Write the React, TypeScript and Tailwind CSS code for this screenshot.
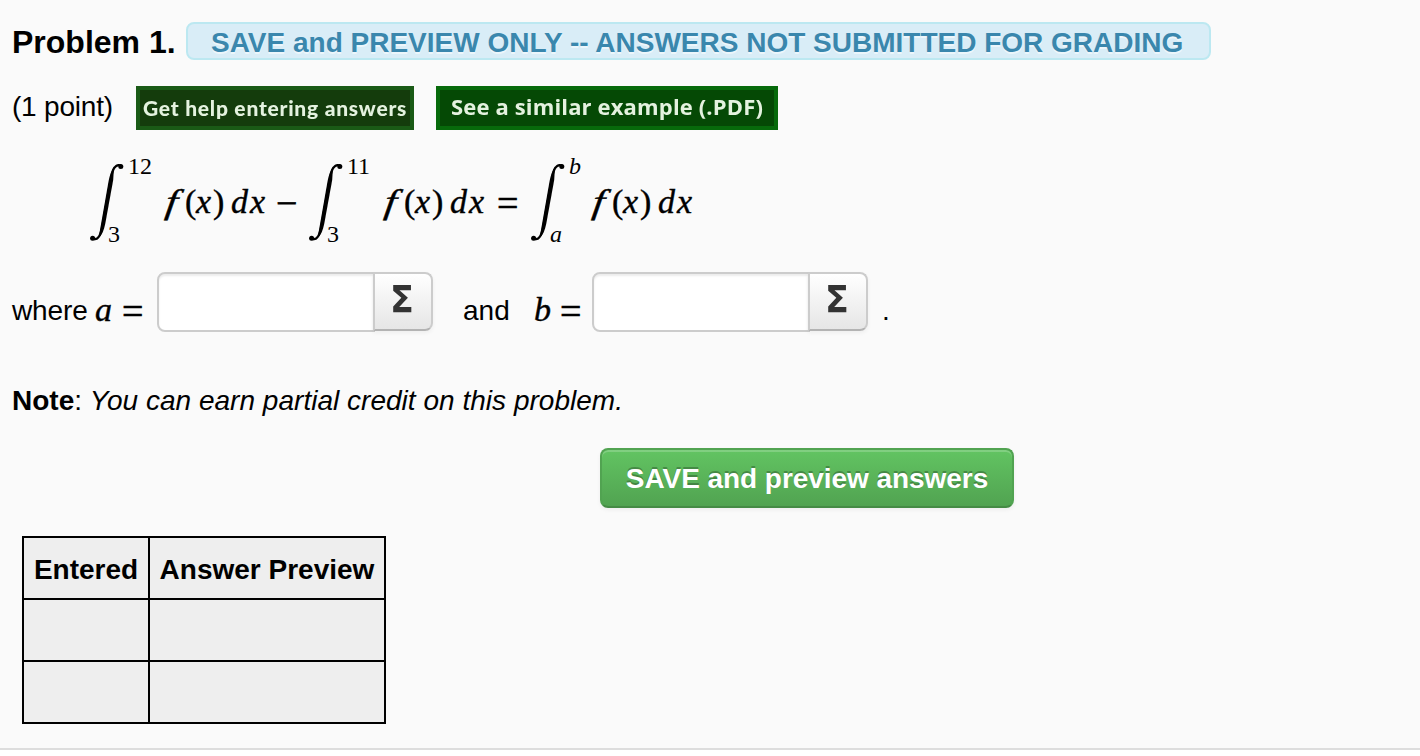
import type { ReactNode } from "react";

/* ── Integral sign with its limits ── */
function Integral({ upper, lower, italic }: { upper: string; lower: string; italic?: boolean }) {
  return (
    <div className={`flex h-[100px] shrink-0 font-['Liberation_Serif',serif] text-[24px] leading-[24px] ${italic ? "w-[64px] italic" : "w-[78px]"}`}>
      <svg viewBox="0 0 34 78" className="mt-[13px] h-[78px] w-[34px] shrink-0">
        <path
          d="M3 75.8 C8.3 78 10.8 71.5 12.6 62 L20.6 17 C22.4 7 24.8 0.6 30.4 2.3"
          fill="none"
          stroke="#000"
          strokeWidth="2.2"
          strokeLinecap="round"
        />
        <path d="M10 67 L18.6 18 C19.8 12 21.4 7 24 3.4 L23.2 17 L15.2 61 C14 67 12 72 8.6 75 Z" />
        <circle cx="2.6" cy="75.2" r="2.5" />
        <circle cx="30.8" cy="3.4" r="2.5" />
      </svg>
      <div className="relative flex-1">
        <span className="absolute left-[4px] top-[4px]">{upper}</span>
        <span className={`absolute top-[72px] ${italic ? "left-[-15px]" : "left-[-16px]"}`}>{lower}</span>
      </div>
    </div>
  );
}

/* ── f(x) dx ── */
function Integrand() {
  return (
    <div className="mt-[32px] flex h-[40px] w-[98px] shrink-0 whitespace-nowrap font-['Liberation_Serif',serif] text-[34px] italic leading-[40px] [-webkit-text-stroke:0.4px_#000]">
      <span className="-ml-[2px] w-[19px] origin-left -skew-x-6 scale-x-125">f</span>
      <span className="w-[11px] not-italic">(</span>
      <span className="w-[17px]">x</span>
      <span className="w-[18px] not-italic">)</span>
      <span className="w-[19px]">d</span>
      <span className="w-[16px]">x</span>
    </div>
  );
}

function Operator({ children }: { children: ReactNode }) {
  return (
    <span className="mt-[33px] w-[21px] text-center font-['Liberation_Serif',serif] text-[38px] leading-[40px] [-webkit-text-stroke:0.6px_#000]">
      {children}
    </span>
  );
}

/* ── Text field with the equation editor button ── */
function AnswerField({ label }: { label: string }) {
  return (
    <div className="flex h-[60px] w-[276px] shrink-0">
      <input
        aria-label={label}
        className="h-[60px] w-[218px] rounded-l-[8px] border-2 border-[#ccc] bg-white px-3 shadow-[inset_0_2px_2px_rgba(0,0,0,0.075)] outline-none"
      />
      <button className="-ml-[2px] flex h-[59px] w-[60px] justify-center rounded-r-[8px] border-2 border-[#ccc] border-b-[#b3b3b3] bg-linear-to-b from-white to-[#e6e6e6] shadow-[0_2px_4px_rgba(0,0,0,0.05)]">
        <span className="mt-[5px] -ml-[2px] font-['DejaVu_Sans',sans-serif] text-[38px] font-bold leading-[40px] text-[#333] scale-x-[0.92]">
          Σ
        </span>
      </button>
    </div>
  );
}

export default function App() {
  return (
    <div className="h-[756px] w-[1420px] overflow-hidden bg-white font-['Liberation_Sans',Arial,sans-serif] text-[28px] leading-[40px] text-black">
      <div className="h-[750px] border-b-2 border-[#ddd] bg-[#fafafa] pt-[22px]">

        {/* Title */}
        <div className="flex h-[38px] whitespace-nowrap font-bold">
          <h1 className="ml-[12px] w-[174px] text-[32px]">Problem 1.</h1>
          <div className="w-[1025px] rounded-[8px] border-2 border-[#bce8f1] bg-[#d9edf7] pl-[23px] leading-[37px] text-[#3a87ad] [text-shadow:0_2px_0_rgba(255,255,255,0.5)]">
            SAVE and PREVIEW ONLY -- ANSWERS NOT SUBMITTED FOR GRADING
          </div>
        </div>

        {/* Points and help links */}
        <div className="mt-[26px] flex h-[44px] whitespace-nowrap">
          <span className="mt-[1px] ml-[12px] w-[124px] tracking-[-0.2px]">(1 point)</span>
          <a className="h-[44px] w-[278px] border-4 border-[#1a5a16] bg-[#143c0c] pl-[3px] font-['Lato',sans-serif] text-[21px] font-black leading-[35px] tracking-[0.75px] text-[#e4f2df]">
            <span className="inline-block blur-[0.6px]">Get help entering answers</span>
          </a>
          <a className="ml-[22px] h-[44px] w-[342px] border-4 border-[#076a0b] bg-[#054905] pl-[11px] font-['Open_Sans',sans-serif] text-[22px] font-bold leading-[32px] tracking-[0.15px] text-[#e4f2df]">
            <span className="inline-block blur-[0.6px]">See a similar example (.PDF)</span>
          </a>
        </div>

        {/* Equation */}
        <div className="mt-[20px] ml-[90px] flex h-[100px]">
          <Integral upper="12" lower="3" />
          <Integrand />
          <div className="flex w-[43px] pl-[10px]"><Operator>−</Operator></div>
          <Integral upper="11" lower="3" />
          <Integrand />
          <div className="ml-[12px] flex w-[34px]"><Operator>=</Operator></div>
          <Integral upper="b" lower="a" italic />
          <Integrand />
        </div>

        {/* Answer fields */}
        <div className="mt-[22px] flex h-[60px] whitespace-nowrap">
          <span className="mt-[19px] ml-[12px] w-[83px] tracking-[-0.1px]">where</span>
          <span className="mt-[18px] w-[27px] font-['Liberation_Serif',serif] text-[34px] italic [-webkit-text-stroke:0.4px_#000]">a</span>
          <span className="mt-[19px] w-[35px] font-['Liberation_Serif',serif] text-[38px] [-webkit-text-stroke:0.6px_#000]">=</span>
          <AnswerField label="a" />
          <span className="mt-[19px] ml-[30px] w-[71px]">and</span>
          <span className="mt-[18px] w-[26px] font-['Liberation_Serif',serif] text-[34px] italic [-webkit-text-stroke:0.4px_#000]">b</span>
          <span className="mt-[19px] w-[32px] font-['Liberation_Serif',serif] text-[38px] [-webkit-text-stroke:0.6px_#000]">=</span>
          <AnswerField label="b" />
          <span className="mt-[19px] ml-[14px]">.</span>
        </div>

        <p className="mt-[49px] ml-[12px] h-[40px] whitespace-nowrap">
          <b>Note</b>: <i className="tracking-[0.02px]">You can earn partial credit on this problem.</i>
        </p>

        <button className="mt-[27px] ml-[600px] block h-[60px] w-[414px] whitespace-nowrap rounded-[8px] border-2 border-[#51a351] border-b-[#458b45] bg-linear-to-b from-[#62c462] to-[#51a351] pt-[2px] font-bold tracking-[-0.05px] text-white shadow-[inset_0_2px_0_rgba(255,255,255,0.2),0_2px_4px_rgba(0,0,0,0.05)] [text-shadow:0_-2px_0_rgba(0,0,0,0.25)]">
          SAVE and preview answers
        </button>

        {/* Results */}
        <table className="mt-[28px] ml-[22px] h-[188px] w-[364px] table-fixed border-separate border-spacing-0 border-t-2 border-l-2 border-black bg-[#eee]">
          <thead>
            <tr className="h-[62px]">
              <th className="w-[126px] whitespace-nowrap border-r-2 border-b-2 border-black pt-[4px]">Entered</th>
              <th className="whitespace-nowrap border-r-2 border-b-2 border-black pt-[4px]">Answer Preview</th>
            </tr>
          </thead>
          <tbody>
            {["a", "b"].map((name) => (
              <tr key={name} className="h-[62px]">
                <td className="border-r-2 border-b-2 border-black" />
                <td className="border-r-2 border-b-2 border-black" />
              </tr>
            ))}
          </tbody>
        </table>
      </div>
    </div>
  );
}
